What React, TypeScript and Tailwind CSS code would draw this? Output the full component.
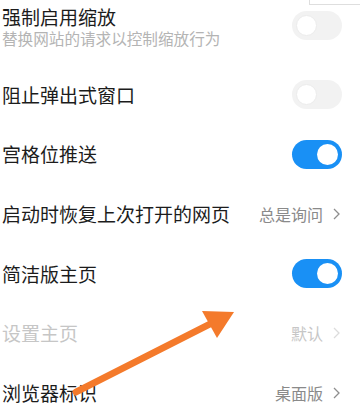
import React from "react";

type Row =
  | { kind: "toggle"; title: string; sub?: string; on: boolean }
  | { kind: "value"; title: string; value: string; disabled?: boolean };

const ROWS: Row[] = [
  { kind: "toggle", title: "阻止弹出式窗口", on: false },
  { kind: "toggle", title: "宫格位推送", on: true },
  { kind: "value", title: "启动时恢复上次打开的网页", value: "总是询问" },
  { kind: "toggle", title: "简洁版主页", on: true },
  { kind: "value", title: "设置主页", value: "默认", disabled: true },
  { kind: "value", title: "浏览器标识", value: "桌面版" },
];

function Toggle({ on }: { on: boolean }) {
  return (
    <div
      className={`w-[50px] h-[29px] rounded-full flex items-center px-[4px] shrink-0 ${
        on ? "bg-[#1990f5] justify-end" : "bg-[#f2f2f2] justify-start"
      }`}
    >
      <div
        className={`w-[21px] h-[21px] rounded-full bg-white ${
          on ? "" : "border border-[#ececec]"
        }`}
      />
    </div>
  );
}

function Chevron({ light }: { light?: boolean }) {
  return (
    <svg width="7" height="12" viewBox="0 0 7 12" className="ml-[10px]">
      <path
        d="M1 1l5 5-5 5"
        fill="none"
        stroke={light ? "#dcdcdc" : "#8e8e8e"}
        strokeWidth="1.3"
      />
    </svg>
  );
}

export default function App() {
  return (
    <div
      className="relative w-[360px] h-[415px] overflow-hidden bg-white"
      style={{ fontFamily: '"Noto Sans CJK SC", "Noto Sans", sans-serif' }}
    >
      {/* first row, scrolled partly out of view */}
      <div className="-mt-[15px] h-[80px] flex items-center justify-between pl-[2px] pr-[18px]">
        <div className="flex flex-col pt-[4px]">
          <span className="text-[19px] leading-[22px] text-[#1c1c1c]">强制启用缩放</span>
          <span className="text-[15.6px] leading-[20px] text-[#b4b4b4]">替换网站的请求以控制缩放行为</span>
        </div>
        <Toggle on={false} />
      </div>

      {ROWS.map((row, i) => (
        <div
          key={i}
          className="h-[59.6px] flex items-center justify-between pl-[2px] pr-[18px]"
        >
          <span
            className={`text-[19px] leading-[22px] ${
              row.kind === "value" && row.disabled ? "text-[#c6c6c6]" : "text-[#1c1c1c]"
            }`}
          >
            {row.title}
          </span>
          {row.kind === "toggle" ? (
            <Toggle on={row.on} />
          ) : (
            <div className="flex items-center pr-[2px]">
              <span
                className={`text-[16px] leading-[20px] ${
                  row.disabled ? "text-[#c6c6c6]" : "text-[#8a8a8a]"
                }`}
              >
                {row.value}
              </span>
              <Chevron light={row.disabled} />
            </div>
          )}
        </div>
      ))}

      {/* partial box at the top right edge */}
      <div className="absolute left-[309px] -top-[10px] w-[70px] h-[15px] border border-[#dedede] bg-white" />

      {/* annotation arrow */}
      <svg
        className="absolute inset-0 pointer-events-none"
        width="360"
        height="415"
        viewBox="0 0 360 415"
      >
        <line
          x1="76"
          y1="392"
          x2="212"
          y2="323"
          stroke="#f47a2b"
          strokeWidth="7"
          strokeLinecap="round"
        />
        <polygon points="202,311 234,312 217,338" fill="#f47a2b" />
      </svg>
    </div>
  );
}
